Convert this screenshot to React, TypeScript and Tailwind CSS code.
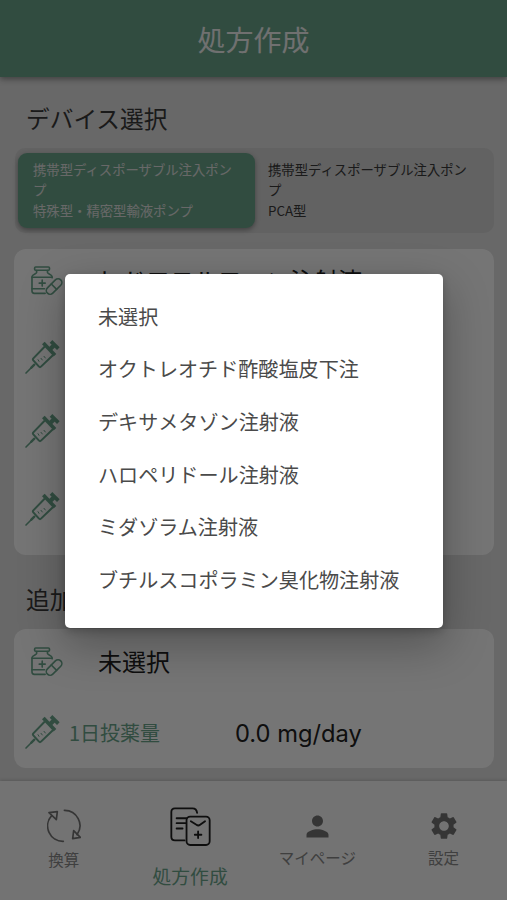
import React from 'react'
import { MdPerson, MdSettings } from 'react-icons/md'

const options = [
  '未選択',
  'オクトレオチド酢酸塩皮下注',
  'デキサメタゾン注射液',
  'ハロペリドール注射液',
  'ミダゾラム注射液',
  'ブチルスコポラミン臭化物注射液',
]

const Bottle = () => (
  <svg viewBox="0 0 100 94" className="w-[33px] h-[31px]" fill="none" stroke="#6ba78d" strokeWidth="5" strokeLinejoin="round" strokeLinecap="round">
    <rect x="14" y="6" width="45" height="10" rx="3" />
    <path d="M20 17v6c0 4-14 5-14 13v43c0 4 3 7 7 7h33M53 17v6c0 4 14 5 14 13v3" />
    <path d="M6 37h61M6 72h38M28 55h18M37 46v18" />
    <g transform="rotate(-45 73 66)">
      <rect x="45" y="54" width="57" height="23" rx="11.5" />
      <path d="M73 54v23" />
    </g>
  </svg>
)

const Syringe = () => (
  <svg viewBox="0 0 108 108" className="w-[36px] h-[36px]" fill="none" stroke="#6ba78d" strokeWidth="6" strokeLinejoin="round" strokeLinecap="round">
    <path d="M6 102l18-18" strokeWidth="5" />
    <path d="M22 86l9-9" strokeWidth="7" />
    <path d="M61 24L28 58c-2 2-2 4 0 6l17 19c2 2 4 2 6 0l34-33" />
    <path d="M58 12l35 37" strokeWidth="11" strokeLinecap="butt" />
    <path d="M78 31l15-15" strokeWidth="13" strokeLinecap="butt" />
    <path d="M81 7l22 22" strokeWidth="11" strokeLinecap="butt" />
    <path d="M42 62l3 5M51 58l4 5M60 52l4 5" strokeWidth="3" />
  </svg>
)

const ConvertIcon = () => (
  <svg viewBox="0 0 102 102" className="w-[34px] h-[34px]" fill="none" stroke="#757575" strokeWidth="5" strokeLinejoin="round" strokeLinecap="round">
    <path d="M52 4a46 46 0 0 1 38 73" />
    <path d="M49 97A46 46 0 0 1 14 20" />
    <path d="M6 11l25-3-3 24zM80 65l20 20-23 4z" />
  </svg>
)

const PrescriptionIcon = () => (
  <svg viewBox="0 0 124 118" className="w-[41px] h-[39px]" fill="none" stroke="#1f1f1f" strokeWidth="5.5" strokeLinejoin="round" strokeLinecap="round">
    <path d="M44 101H15c-7 0-11-4-11-11V15C4 8 8 4 15 4h53c8 0 13 5 14 14" />
    <rect x="50" y="29" width="70" height="86" rx="11" />
    <path d="M20 34h30M20 49h27M20 65h18" />
    <path d="M63 43l17 11c4 3 7 3 11 0l15-11M85 74v20M75 84h20" />
  </svg>
)

const App = () => {
  return (
    <div className="relative flex flex-col w-full h-[900px] overflow-hidden bg-[#e2e2e2] font-['Noto_Sans_CJK_JP',sans-serif] text-[#212121]">
      <header className="z-10 flex h-[77px] shrink-0 items-center justify-center bg-[#6ba78d] text-[28px] text-[#f5f5f5] shadow-[0_2px_6px_rgba(0,0,0,0.4)]">
        処方作成
      </header>

      <main className="flex flex-col h-[704px] shrink-0 pl-[14px] pr-[13px]">
        <h2 className="pl-3 pt-[23px] text-[23.7px] leading-[36px] mb-3 text-[#3a3a3a]">デバイス選択</h2>
        <div className="ml-px flex h-[85px] shrink-0 rounded-[10px] bg-[#d5d5d5] px-[3px] py-[5px] text-[13.35px] leading-[20.3px] text-[#3a3a3a]">
          <div className="w-[237px] rounded-[9px] bg-[#6ba78d] pl-[15px] pr-[20px] pt-[7px] text-[#e2e2e2] shadow-[0_2px_5px_rgba(0,0,0,0.35)]">
            携帯型ディスポーザブル注入ポンプ<br />特殊型・精密型輸液ポンプ
          </div>
          <div className="w-[235px] pl-[13px] pr-[20px] pt-[7px]">
            携帯型ディスポーザブル注入ポンプ<br />PCA型
          </div>
        </div>

        {/* main drug */}
        <section className="mt-4 h-[306px] shrink-0 rounded-[12px] bg-white pl-[10px] pt-[14px]">
          <div className="flex items-center h-[34px] pl-[6px]">
            <Bottle />
            <span className="ml-[35px] text-[24px]">ヒドロモルフォン注射液</span>
          </div>
          <div className="mt-[42px] flex flex-col">
            <Syringe />
            <div className="mt-[38px]"><Syringe /></div>
            <div className="mt-[42px]"><Syringe /></div>
          </div>
        </section>

        {/* additional drug */}
        <h2 className="pl-3 mt-[26px] mb-3 text-[23.7px] leading-[36px] text-[#3a3a3a]">追加</h2>
        <section className="h-[139px] shrink-0 rounded-[12px] bg-white pl-[10px] pt-[15px]">
          <div className="flex items-center h-[34px] pl-[6px]">
            <Bottle />
            <span className="ml-[35px] text-[24px]">未選択</span>
          </div>
          <div className="mt-[35px] flex items-center h-[38px]">
            <Syringe />
            <span className="mt-[2px] ml-[9px] w-[166px] text-[20px] text-[#6ba78d]">1日投薬量</span>
            <span className="mt-[3px] font-[Inter,sans-serif] text-[23.7px]">0.0 mg/day</span>
          </div>
        </section>
      </main>

      <nav className="grid grid-cols-4 h-[119px] shrink-0 bg-[#fafafa] text-[15.5px] leading-[22px] text-[#8a8a8a] shadow-[0_-1px_3px_rgba(0,0,0,0.15)]">
        <div className="flex flex-col items-center pt-[28px] pl-px">
          <ConvertIcon />
          <span className="mt-[5px]">換算</span>
        </div>
        <div className="flex flex-col items-center pt-[26px]">
          <PrescriptionIcon />
          <span className="mt-[19px] text-[18.8px] text-[#6ba78d]">処方作成</span>
        </div>
        <div className="flex flex-col items-center pt-[29px] pl-px">
          <MdPerson className="size-[33px] text-[#757575]" />
          <span className="mt-[3px]">マイページ</span>
        </div>
        <div className="flex flex-col items-center pt-[29px]">
          <MdSettings className="size-[32px] text-[#757575]" />
          <span className="mt-[4px]">設定</span>
        </div>
      </nav>

      {/* option picker */}
      <div className="absolute inset-0 z-20 bg-black/54 pl-[65px] pt-[274px]">
        <ul className="w-[378px] h-[354px] rounded-[5px] bg-white pl-[33px] pt-[16.6px] text-[20.1px] text-[#4a4a4a] shadow-[0_16px_44px_2px_rgba(0,0,0,0.28),0_3px_8px_rgba(0,0,0,0.2)]">
          {options.map((name) => (
            <li key={name} className="flex h-[52.6px] items-center whitespace-nowrap">{name}</li>
          ))}
        </ul>
      </div>
    </div>
  )
}

export default App
